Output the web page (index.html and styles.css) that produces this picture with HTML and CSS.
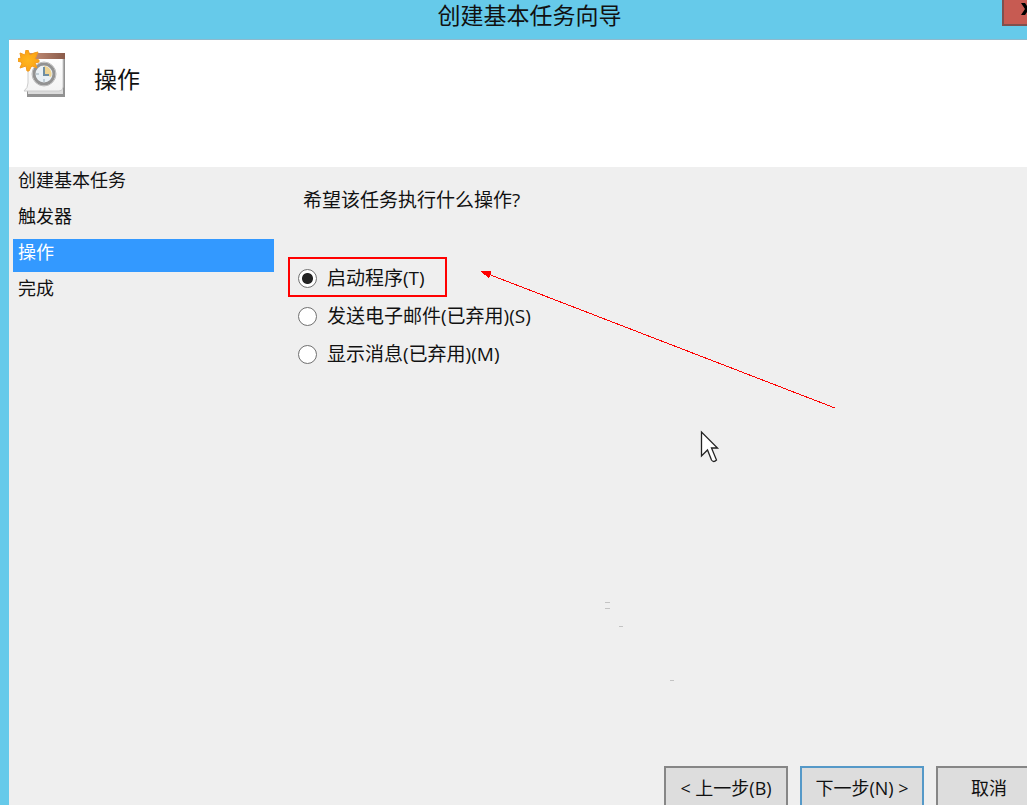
FILE: index.html
```
<!DOCTYPE html>
<html lang="zh-CN">
<head>
    <title>创建基本任务向导</title>
    <meta charset="UTF-8">
    <link rel="stylesheet" href="styles.css">
</head>
<body>
    <div class="dialog">
        <div class="titlebar">
            <h1 class="title">创建基本任务向导</h1>
            <button class="close-button" type="button" aria-label="关闭">
                <svg width="12" height="12" viewBox="0 0 12 12"><path d="M0 0h4l2 3 2-3h4L8 6l4 6H8L6 9l-2 3H0l4-6z"/></svg>
            </button>
        </div>

        <div class="header">
            <svg class="task-icon" width="48" height="48" viewBox="0 0 48 48">
                <defs>
                    <linearGradient id="page" x1="0" y1="0" x2="0" y2="1">
                        <stop offset="0" stop-color="#ffffff"/>
                        <stop offset="1" stop-color="#f3f3f3"/>
                    </linearGradient>
                    <linearGradient id="top" x1="0" y1="0" x2="1" y2="0">
                        <stop offset="0" stop-color="#c9937c"/>
                        <stop offset="1" stop-color="#8a5b4a"/>
                    </linearGradient>
                    <radialGradient id="sun">
                        <stop offset="0" stop-color="#ffb61e"/>
                        <stop offset="1" stop-color="#fba414"/>
                    </radialGradient>
                </defs>
                <path d="M9 38h36V9h2v38H9z" fill="#929292"/>
                <path d="M10 38h35v6H10z" fill="#dcdcdc"/>
                <path d="M10 5h35v32q0 4-4 4H6q4-3 4-8z" fill="url(#page)" stroke="#cccccc"/>
                <path d="M10 3h37v6H10z" fill="url(#top)"/>
                <circle cx="26" cy="24" r="10" fill="#e9f0f5" stroke="#929292" stroke-width="3"/>
                <circle cx="26" cy="24" r="12" fill="none" stroke="#bcbcbc"/>
                <path d="M26 24v-8a8 8 0 0 1 7 11z" fill="#f0d491"/>
                <path d="M26 17v8h5" fill="none" stroke="#6e8ea3" stroke-width="2"/>
                <path d="M26 29v3M18 24h3" stroke="#98aab5"/>
                <path d="M10 0l2 5 4-2 4-1-2 5-1 2 4 1v2l-4 1 2 5-5-2-1 1-2 4h-2l-1-5-6 2 2-5-1-1-4-1v-2l4-1-1-5 5 2 1-5z" fill="url(#sun)" stroke="#f29a1c"/>
            </svg>
            <h2 class="page-title">操作</h2>
        </div>

        <div class="content">
            <ul class="steps">
                <li>创建基本任务</li>
                <li>触发器</li>
                <li class="active" aria-current="step">操作</li>
                <li>完成</li>
            </ul>

            <fieldset class="actions">
                <legend>希望该任务执行什么操作?</legend>
                <div class="option highlighted">
                    <input type="radio" name="action" id="start-program" checked>
                    <label for="start-program">启动程序(T)</label>
                </div>
                <div class="option">
                    <input type="radio" name="action" id="send-email">
                    <label for="send-email">发送电子邮件(已弃用)(S)</label>
                </div>
                <div class="option">
                    <input type="radio" name="action" id="show-message">
                    <label for="show-message">显示消息(已弃用)(M)</label>
                </div>
            </fieldset>
        </div>

        <div class="footer">
            <button type="button">&lt; 上一步(B)</button>
            <button type="button" class="default">下一步(N) &gt;</button>
            <button type="button" class="cancel">取消</button>
        </div>
    </div>

    <!-- arrow, mouse pointer and stray marks lying over the dialog -->
    <svg class="overlay" width="840" height="690" viewBox="0 0 840 690" aria-hidden="true">
        <g shape-rendering="crispEdges">
            <path d="M488 274L835 408" stroke="#ff0000" fill="none"/>
            <path d="M480 271h11v3l-2 4z" fill="#ff0000"/>
        </g>
        <path d="M701.500 432v24l6-6 4 10q2 3 5 0l-5-12h6z" fill="#ffffff" stroke="#222222" stroke-width="1.300"/>
        <path d="M605 602.500h5M605 608.500h5M619 626.500h4M670 680.500h4" stroke="#c3c3c3"/>
    </svg>
</body>
</html>
```

FILE: styles.css
```
:root {
    --frame-color: #66caea;
    --dialog-bg: #efefef;
    --button-bg: #dddddd;
    --select-color: #3399ff;
    --mark-color: #ff0000;
}

*,
*::before {
    box-sizing: border-box;
}

body {
    margin: 0;
    height: 100vh;
    overflow: hidden;
    position: relative;
    font-family: "Open Sans", "Noto Sans CJK SC", sans-serif;
    font-size: 18px;
    color: #111111;
}

/* The window runs past the right and bottom edges of the screen */
.dialog {
    display: flex;
    flex-direction: column;
    width: calc(100% + 32px);
    height: calc(100vh + 5px);
    padding-left: 9px;
    background-color: var(--frame-color);
}

.titlebar {
    display: flex;
    align-items: flex-start;
    height: 40px;
    flex-shrink: 0;
    border-bottom: 1px solid #8fb9cc;
}

.title {
    flex: 1;
    margin: 0;
    padding-left: 48px;
    font-size: 23px;
    font-weight: 400;
    line-height: 30px;
    text-align: center;
}

.close-button {
    display: flex;
    align-items: center;
    justify-content: center;
    width: 50px;
    height: 26px;
    margin-right: 7px;
    padding: 0 0 6px;
    border: 2px solid #80504d;
    border-top: none;
    background-color: #c75b52;
}

.header {
    display: flex;
    flex-shrink: 0;
    height: 127px;
    padding: 10px 9px;
    gap: 28px;
    background-color: #ffffff;
}

.page-title {
    margin: 0;
    font-size: 23px;
    font-weight: 400;
    line-height: 58px;
}

.content {
    display: flex;
    flex: 1;
    background-color: var(--dialog-bg);
}

.steps {
    display: flex;
    flex-direction: column;
    gap: 3px;
    width: 261px;
    margin: 0 0 0 4px;
    padding: 0;
    list-style: none;
}

.steps li {
    height: 33px;
    padding-left: 5px;
    line-height: 26px;
}

.steps .active {
    background-color: var(--select-color);
    color: #ffffff;
}

.actions {
    flex: 1;
    margin: 0;
    padding: 0 0 0 24px;
    border: none;
    font-size: 19px;
}

.actions legend {
    padding: 20px 0 46px 5px;
    line-height: 26px;
}

.option {
    display: flex;
    align-items: center;
    gap: 10px;
    height: 38px;
    position: relative;
}

.option label {
    line-height: 24px;
}

.option input {
    appearance: none;
    width: 19px;
    height: 19px;
    margin: 0;
    border: 1px solid #707070;
    border-radius: 50%;
    background-color: #ffffff;
}

.option input:checked {
    background-image: radial-gradient(circle, #222222 5px, transparent 6px);
}

.highlighted::before {
    content: "";
    position: absolute;
    top: -2px;
    left: -10px;
    width: 159px;
    height: 40px;
    border: 2px solid var(--mark-color);
    pointer-events: none;
}

.footer {
    display: flex;
    justify-content: flex-end;
    gap: 12px;
    flex-shrink: 0;
    padding-right: 17px;
    background-color: var(--dialog-bg);
}

.footer button {
    width: 124px;
    height: 44px;
    padding: 0;
    border: 2px solid #868686;
    background-color: var(--button-bg);
    color: inherit;
    font: inherit;
    line-height: 24px;
}

.footer .default {
    border-color: #5599c8;
}

.footer .cancel {
    width: 106px;
}

.overlay {
    position: absolute;
    top: 0;
    left: 0;
    overflow: visible;
    pointer-events: none;
}
```
